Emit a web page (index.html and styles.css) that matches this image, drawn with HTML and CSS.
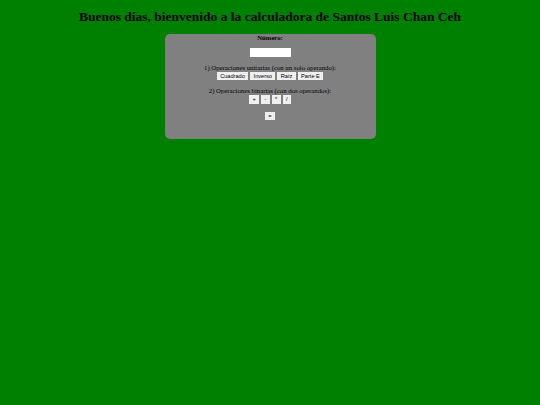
FILE: index.html
```
<!DOCTYPE html>
<html lang="es">
<head>
<meta charset="utf-8">
<title>Calculadora</title>
<link rel="stylesheet" href="styles.css">
</head>
<body>
<h1 class="title">Buenos días, bienvenido a la calculadora de Santos Luis Chan Ceh</h1>
<main class="panel">
  <p class="label">Número:</p>
  <input class="field" type="text">
  <p class="caption">1) Operaciones unitarias (con un solo operando):</p>
  <div class="row">
    <button class="btn">Cuadrado</button>
    <button class="btn">Inverso</button>
    <button class="btn">Raíz</button>
    <button class="btn">Parte E</button>
  </div>
  <p class="caption">2) Operaciones binarias (con dos operandos):</p>
  <div class="row">
    <button class="btn">+</button>
    <button class="btn">-</button>
    <button class="btn">*</button>
    <button class="btn">/</button>
  </div>
  <button class="btn equals">=</button>
</main>
</body>
</html>
```
FILE: styles.css
```
html {
  background: #008000;
}
body {
  margin: 0;
  color: #000;
  font-family: "Liberation Serif", serif;
  overflow: hidden;
}
.title {
  margin: 0;
  padding: 9px 0;
  font-size: 13.5px;
  line-height: 16px;
  font-weight: bold;
  text-align: center;
}
.panel {
  box-sizing: border-box;
  width: 211px;
  height: 105px;
  margin: 0 auto;
  background: #808080;
  border-radius: 5px;
  display: flex;
  flex-direction: column;
  align-items: center;
}
.label {
  margin: 0 0 6px;
  font-size: 6.75px;
  line-height: 8px;
  font-weight: bold;
}
.field {
  box-sizing: border-box;
  flex: none;
  width: 41px;
  height: 8.5px;
  padding: 0;
  border: 0;
  background: #fff;
}
.caption {
  margin: 7px 0 0;
  font-size: 6.75px;
  line-height: 8px;
}
.row {
  display: flex;
  gap: 2px;
}
.btn {
  box-sizing: border-box;
  height: 8.5px;
  padding: 0 3.4px;
  border: 0;
  background: #efefef;
  color: #000;
  font-family: "Liberation Sans", sans-serif;
  font-size: 5.625px;
  line-height: 8.5px;
}
.equals {
  margin-top: 8px;
}
```
